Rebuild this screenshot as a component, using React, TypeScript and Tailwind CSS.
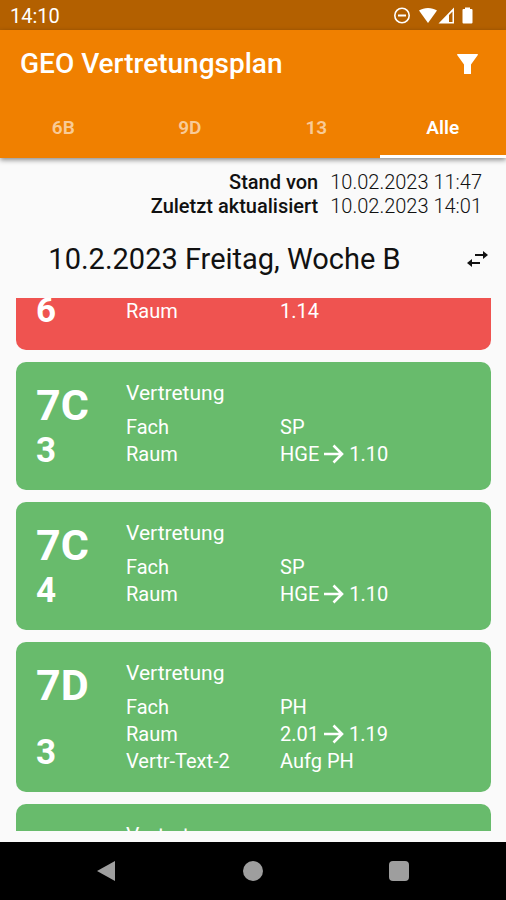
import type { ReactNode } from 'react'

type Row = { label: string; value: string; to?: string }
type Entry = { course: string; lesson: string; title: string; rows: Row[] }

const TABS = ['6B', '9D', '13', 'Alle']

const ENTRIES: Entry[] = [
  {
    course: '7C', lesson: '3', title: 'Vertretung',
    rows: [{ label: 'Fach', value: 'SP' }, { label: 'Raum', value: 'HGE', to: '1.10' }],
  },
  {
    course: '7C', lesson: '4', title: 'Vertretung',
    rows: [{ label: 'Fach', value: 'SP' }, { label: 'Raum', value: 'HGE', to: '1.10' }],
  },
  {
    course: '7D', lesson: '3', title: 'Vertretung',
    rows: [
      { label: 'Fach', value: 'PH' },
      { label: 'Raum', value: '2.01', to: '1.19' },
      { label: 'Vertr-Text-2', value: 'Aufg PH' },
    ],
  },
]

function StatusBar() {
  return (
    <div className="flex h-[30px] shrink-0 items-center justify-between bg-[#b36000] pl-2.5 pr-8 pt-0.5 text-white">
      <span className="text-[20px] leading-6">14:10</span>
      <svg className="h-5 w-20" viewBox="0 0 80 20" fill="currentColor" aria-hidden="true">
        <circle cx="8" cy="9.5" r="7.2" fill="none" stroke="currentColor" strokeWidth="1.6" />
        <path d="M4 8.5h8v2H4z" />
        <path d="M25 4.5C30 1 38 1 43 4.5L34 17z" />
        <path fillRule="evenodd" d="M60 1.5V17.5H44.5zM55 9v7h3.5V5.5z" />
        <path d="M71 3V1.5h5V3h1.5a1 1 0 0 1 1 1v12.5a1 1 0 0 1-1 1h-8a1 1 0 0 1-1-1V4a1 1 0 0 1 1-1z" />
      </svg>
    </div>
  )
}

function Header() {
  return (
    <header className="z-10 shrink-0 bg-[#f08000] text-white shadow-[0_2px_5px_rgba(0,0,0,0.45)]">
      <div className="flex h-[68px] items-center justify-between pl-5 pr-7">
        <h1 className="text-[28px] font-medium leading-9">GEO Vertretungsplan</h1>
        <button type="button" aria-label="Filter">
          <svg className="h-5 w-[21px]" viewBox="0 0 21 20" fill="currentColor">
            <path d="M.8 0h19.4q.8 0 .8.8L14 10.5V19.500q0 .5-.5.5h-6q-.5 0-.5-.5V10.500L0 .8Q0 0 .8 0z" />
          </svg>
        </button>
      </div>
      <nav role="tablist" className="grid h-[60px] grid-cols-4">
        {TABS.map(tab => (
          <button key={tab} type="button" role="tab" aria-selected={tab === 'Alle'}
            className="border-b-[3px] border-transparent pt-[3px] text-[19px] font-semibold text-white/60 aria-selected:border-white aria-selected:text-white">
            {tab}
          </button>
        ))}
      </nav>
    </header>
  )
}

function Arrow() {
  return (
    <svg className="mx-[5px] h-5 w-5" viewBox="0 0 20 20" fill="none" stroke="currentColor" strokeWidth="2.6" aria-label="wird zu">
      <path d="M0 10h18M9.500 1.500 18 10l-8.500 8.500" />
    </svg>
  )
}

function Card({ color, children }: { color: string; children: ReactNode }) {
  return <article className={`flex shrink-0 px-5 py-[18px] text-white ${color}`}>{children}</article>
}

function Line({ row }: { row: Row }) {
  return (
    <div className="flex h-[27px] items-center text-[20px]">
      <dt className="w-[154px]">{row.label}</dt>
      <dd className="flex items-center">
        {row.value}
        {row.to && <Arrow />}
        {row.to}
      </dd>
    </div>
  )
}

function EntryCard({ entry }: { entry: Entry }) {
  return (
    <Card color="rounded-[10px] bg-[#68bb6c]">
      <div className="flex w-[90px] flex-col justify-between font-bold">
        <span className="text-[43px] leading-[50px]">{entry.course}</span>
        <span className="text-[35px] leading-[42px]">{entry.lesson}</span>
      </div>
      <div>
        <h3 className="mb-1.5 text-[21px] leading-[27px]">{entry.title}</h3>
        <dl>{entry.rows.map(row => <Line key={row.label} row={row} />)}</dl>
      </div>
    </Card>
  )
}

export default function App() {
  return (
    <div className="flex h-screen flex-col bg-[#fafafa] font-['Roboto',sans-serif] text-[#111]">
      <StatusBar />
      <Header />

      <main className="flex min-h-0 grow flex-col pb-[11px]">
        <dl className="grid grid-cols-[1fr_auto] gap-x-3 pl-5 pr-6 pt-3 text-[20px] leading-6">
          <dt className="text-right font-medium">Stand von</dt>
          <dd className="font-light">10.02.2023 11:47</dd>
          <dt className="text-right font-medium">Zuletzt aktualisiert</dt>
          <dd className="font-light">10.02.2023 14:01</dd>
        </dl>

        <div className="flex h-20 shrink-0 items-center pt-0.5">
          <h2 className="grow text-center text-[29px] leading-9">10.2.2023 Freitag, Woche B</h2>
          <button type="button" aria-label="Tag wechseln" className="flex w-[57px] justify-center">
            <svg className="h-4 w-[21px]" viewBox="0 0 21 16" fill="currentColor">
              <path d="M21 4 16 0v3H8v2h8v3zM0 12l5-4v3h8v2H5v3z" />
            </svg>
          </button>
        </div>

        <div className="flex min-h-0 grow flex-col gap-3 overflow-hidden pl-4 pr-[15px]">
          {/* scrolled halfway past the top edge */}
          <div className="flex h-[52px] shrink-0 flex-col justify-end overflow-hidden rounded-b-[10px]">
            <Card color="items-end bg-[#ef5350]">
              <span className="w-[90px] text-[35px] font-bold leading-[42px]">6</span>
              <dl className="pb-2">
                <Line row={{ label: 'Raum', value: '1.14' }} />
              </dl>
            </Card>
          </div>
          {ENTRIES.map((entry, i) => <EntryCard key={i} entry={entry} />)}
          <Card color="rounded-t-[10px] bg-[#68bb6c]">
            <h3 className="pl-[90px] text-[21px] leading-[27px]">Vertretung</h3>
          </Card>
        </div>
      </main>

      <nav className="flex h-[58px] shrink-0 justify-center bg-black text-[#9e9e9e]">
        <button type="button" aria-label="Zurück" className="flex w-[146px] items-center justify-center">
          <svg className="size-5" viewBox="0 0 20 20" fill="currentColor"><path d="M0 10 18 0v20z" /></svg>
        </button>
        <button type="button" aria-label="Startbildschirm" className="flex w-[146px] items-center justify-center">
          <span className="size-5 rounded-full bg-current" />
        </button>
        <button type="button" aria-label="Übersicht" className="flex w-[146px] items-center justify-center">
          <span className="size-5 rounded-sm bg-current" />
        </button>
      </nav>
    </div>
  )
}
